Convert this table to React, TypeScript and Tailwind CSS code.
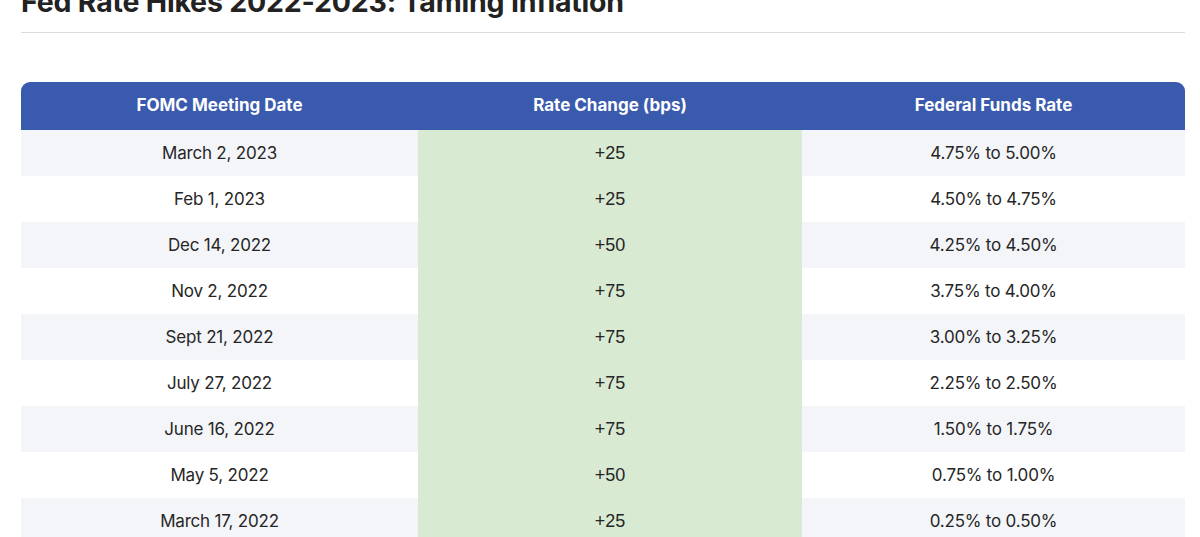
const rows = [
  ["March 2, 2023", "+25", "4.75% to 5.00%"],
  ["Feb 1, 2023", "+25", "4.50% to 4.75%"],
  ["Dec 14, 2022", "+50", "4.25% to 4.50%"],
  ["Nov 2, 2022", "+75", "3.75% to 4.00%"],
  ["Sept 21, 2022", "+75", "3.00% to 3.25%"],
  ["July 27, 2022", "+75", "2.25% to 2.50%"],
  ["June 16, 2022", "+75", "1.50% to 1.75%"],
  ["May 5, 2022", "+50", "0.75% to 1.00%"],
  ["March 17, 2022", "+25", "0.25% to 0.50%"],
];

export default function App() {
  return (
    <div className="h-[537px] w-[1200px] overflow-hidden bg-white font-['Inter',sans-serif] text-[#262626]">
      <div className="px-[21px] pr-[15px]">
        <h1 className="-mt-[20px] text-[28.5px] leading-[44px] font-bold tracking-[-0.2px] text-[#222]">
          Fed Rate Hikes 2022-2023: Taming Inflation
        </h1>
        <div className="mt-[8px] h-px bg-[#dcdcdc]" />
        <table className="mt-[49px] w-full border-collapse">
          <thead>
            <tr className="h-[48px] bg-[#3a5aae] text-[17px] font-bold text-white">
              <th className="w-[397px] rounded-tl-[9px] font-bold">FOMC Meeting Date</th>
              <th className="w-[384px] font-bold">Rate Change (bps)</th>
              <th className="rounded-tr-[9px] font-bold">Federal Funds Rate</th>
            </tr>
          </thead>
          <tbody className="text-[17px] tracking-[-0.2px]">
            {rows.map((r, i) => (
              <tr key={i} className={i % 2 === 0 ? "h-[46px] bg-[#f4f5f9]" : "h-[46px] bg-white"}>
                <td className="pt-[2px] text-center">{r[0]}</td>
                <td className="bg-[#d9ead3] text-center text-[18px] tracking-normal font-['Liberation_Sans',sans-serif]">{r[1]}</td>
                <td className="pt-[2px] text-center">{r[2]}</td>
              </tr>
            ))}
          </tbody>
        </table>
      </div>
    </div>
  );
}
